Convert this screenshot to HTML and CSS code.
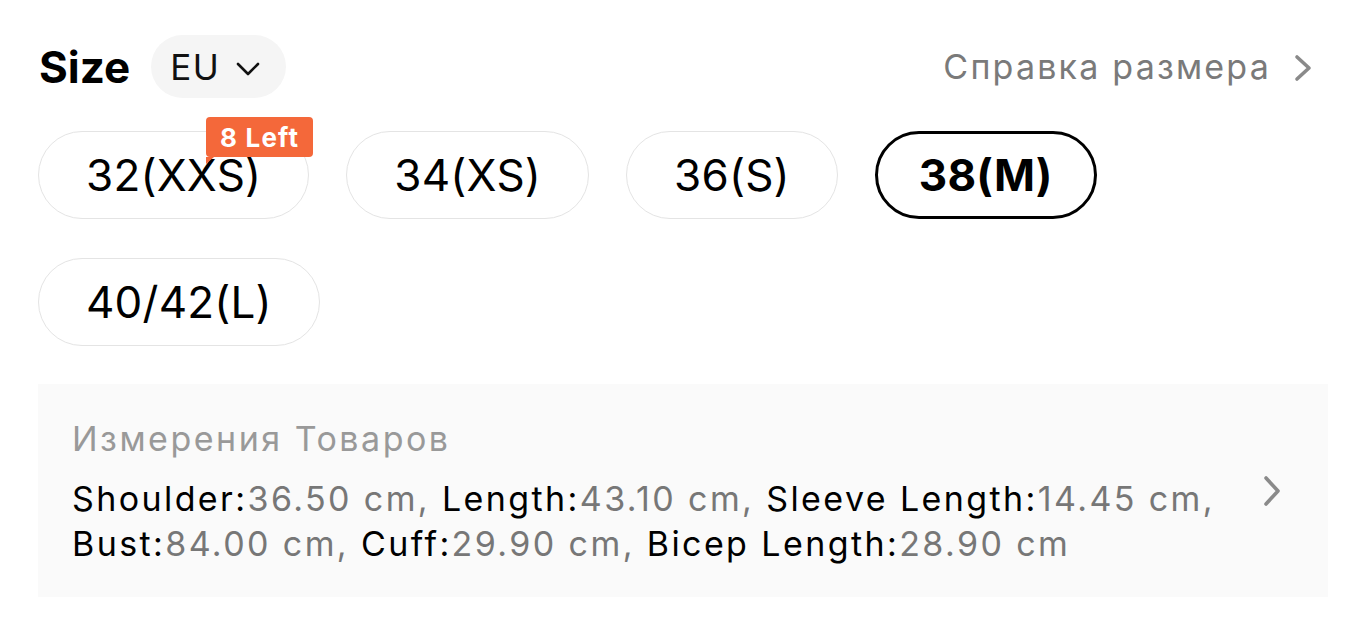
FILE: index.html
```html
<!DOCTYPE html>
<html lang="ru">
<head>
<meta charset="utf-8">
<link rel="stylesheet" href="styles.css">
</head>
<body>
<div class="page">
  <div class="header">
    <div class="header-left">
      <span class="title">Size</span>
      <button class="unit">EU
        <svg class="unit-chev" width="24" height="14" viewBox="0 0 24 14"><path d="M2 2 L12 12 L22 2" fill="none" stroke="#111" stroke-width="2.6" stroke-linecap="round" stroke-linejoin="round"/></svg>
      </button>
    </div>
    <a class="guide">Справка размера
      <svg class="guide-chev" width="20" height="28" viewBox="0 0 20 28"><path d="M4 3 L16 14 L4 25" fill="none" stroke="#8a8a8a" stroke-width="3.6" stroke-linecap="round" stroke-linejoin="round"/></svg>
    </a>
  </div>
  <div class="sizes">
    <div class="size">32(XXS)<span class="badge">8 Left</span></div>
    <div class="size">34(XS)</div>
    <div class="size">36(S)</div>
    <div class="size selected">38(M)</div>
    <div class="size">40/42(L)</div>
  </div>
  <div class="measure">
    <div class="measure-text">
      <div class="measure-title">Измерения Товаров</div>
      <div class="measure-body"><span class="k">Shoulder:</span><span class="v">36.50 cm, </span><span class="k">Length:</span><span class="v">43.10 cm, </span><span class="k">Sleeve Length:</span><span class="v">14.45 cm, </span><span class="k">Bust:</span><span class="v">84.00 cm, </span><span class="k">Cuff:</span><span class="v">29.90 cm, </span><span class="k">Bicep Length:</span><span class="v">28.90 cm</span></div>
    </div>
    <svg class="measure-chev" width="20" height="32" viewBox="0 0 20 32"><path d="M4 3 L16 16 L4 29" fill="none" stroke="#8a8a8a" stroke-width="3.6" stroke-linecap="round" stroke-linejoin="round"/></svg>
  </div>
</div>
</body>
</html>
```

FILE: styles.css
```css
* { box-sizing: border-box; }
html, body { margin: 0; padding: 0; background: #fff; }
body { font-family: Inter, "Liberation Sans", Arial, sans-serif; color: #000; }
.page { padding: 35px 38px 0 38px; }
.header { display: flex; align-items: center; justify-content: space-between; height: 63px; }
.header-left { display: flex; align-items: center; gap: 21px; }
.title { font-size: 44px; font-weight: 700; padding-left: 1px; }
.unit { display: flex; align-items: center; gap: 16px; height: 63px; padding: 0 26px 0 19px; border: none; border-radius: 32px; background: #f5f5f5; font-family: inherit; font-size: 35px; letter-spacing: 1.5px; color: #111; }
.unit-chev { margin-top: 4px; }
.guide { display: flex; align-items: center; gap: 22px; font-size: 34px; letter-spacing: 2.2px; color: #7a7a7a; padding-right: 15px; }
.guide-chev { margin-top: 2px; }
.sizes { display: flex; flex-wrap: wrap; column-gap: 37px; row-gap: 39px; margin-top: 33px; }
.size { position: relative; height: 88px; display: flex; align-items: center; padding: 0 47px; border: 1.5px solid #e4e4e4; border-radius: 44px; font-size: 44px; letter-spacing: 0.2px; color: #000; }
.size.selected { border: 3px solid #000; font-weight: 700; padding: 0 41px; }
.badge { position: absolute; top: -15px; right: -5px; height: 40px; padding: 0 14px; display: flex; align-items: center; background: #f4683a; color: #fff; font-size: 26px; font-weight: 700; border-radius: 4px; letter-spacing: 1.2px; }
.badge::after { content: ""; position: absolute; left: 0; bottom: -7px; border-left: 8px solid #f4683a; border-bottom: 7px solid transparent; }
.measure { display: flex; align-items: center; justify-content: space-between; margin-top: 38px; height: 213px; background: #fafafa; padding: 0 46px 0 34px; }
.measure-text { flex: 1; max-width: 1170px; padding-top: 4px; }
.measure-title { font-size: 34px; letter-spacing: 2.5px; color: #999; line-height: 40px; }
.measure-body { font-size: 34px; letter-spacing: 2.4px; line-height: 45px; margin-top: 17px; }
.k { color: #000; }
.v { color: #777; }
.measure-chev { flex-shrink: 0; }
```
